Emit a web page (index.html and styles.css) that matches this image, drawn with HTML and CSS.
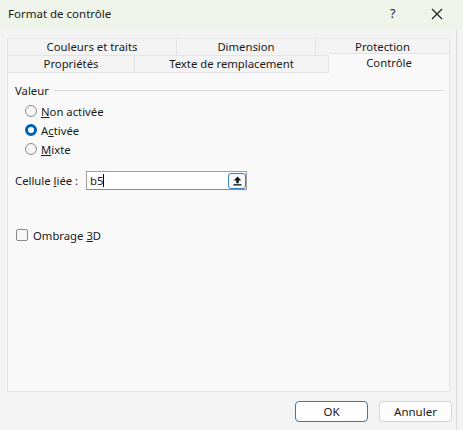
FILE: index.html
```html
<!DOCTYPE html>
<html lang="fr">
<head>
<meta charset="utf-8">
<link rel="stylesheet" href="styles.css">
</head>
<body>
<div class="window">
  <div class="titlebar">
    <span class="title">Format de contrôle</span>
    <span class="help">?</span>
    <span class="close">
      <svg width="12" height="12" viewBox="0 0 12 12"><path d="M1 1L11 11M11 1L1 11" stroke="#1a1a1a" stroke-width="1.1" fill="none"/></svg>
    </span>
  </div>
  <div class="tabs">
    <div class="tabrow">
      <div class="tab w1">Couleurs et traits</div>
      <div class="tab w2">Dimension</div>
      <div class="tab w3">Protection</div>
    </div>
    <div class="tabrow">
      <div class="tab w4">Propriétés</div>
      <div class="tab w5">Texte de remplacement</div>
      <div class="tab w6 active">Contrôle</div>
    </div>
  </div>
  <div class="panel">
    <div class="group-head"><span>Valeur</span><span class="rule"></span></div>
    <div class="options">
      <div class="opt"><span class="radio"></span><span><u>N</u>on activée</span></div>
      <div class="opt"><span class="radio on"></span><span>A<u>c</u>tivée</span></div>
      <div class="opt"><span class="radio"></span><span><u>M</u>ixte</span></div>
    </div>
    <div class="linked">
      <span class="lbl">Cellule <u>l</u>iée :</span>
      <div class="input"><span class="val">b5</span><span class="caret"></span>
        <span class="pick"><svg width="11" height="11" viewBox="0 0 11 11"><path d="M5.5 1.5L1.8 5.4H4.3V8.2H6.7V5.4H9.2Z" fill="#111"/><rect x="1.5" y="9.2" width="8" height="1.3" fill="#111"/></svg></span>
      </div>
    </div>
    <div class="check"><span class="box"></span><span>Ombrage <u>3</u>D</span></div>
  </div>
  <div class="footer">
    <button class="btn primary">OK</button>
    <button class="btn">Annuler</button>
  </div>
  <div class="edge"></div>
</div>
</body>
</html>
```
FILE: styles.css
```css
html, body { margin: 0; padding: 0; }
body {
  width: 463px; height: 430px; overflow: hidden;
  font-family: "Noto Sans", "Open Sans", sans-serif;
  font-size: 11.3px; color: #1a1a1a;
  background: #f3f3f3;
}
.window { position: relative; width: 463px; height: 430px; background: #f3f3f3; }
.titlebar {
  height: 30px; box-sizing: border-box; padding-bottom: 3px; background: #eef4ea;
  display: flex; align-items: center; padding-left: 8px;
}
.title { flex: 1; font-size: 11.5px; }
.help { width: 14px; margin-right: 27px; font-size: 12.5px; }
.close { width: 12px; height: 12px; margin-right: 20px; display: flex; }
.tabs { margin: 8px 0 0 7px; width: 443px; }
.tabrow { display: flex; height: 17px; }
.tab {
  box-sizing: border-box; height: 17px;
  border-top: 1px solid #e3e3e3; border-right: 1px solid #e3e3e3;
  text-align: center; line-height: 16px;
  background: #f3f3f3;
}
.tabrow:first-child .tab { border-top: 1px solid #ebebeb; }
.tabrow .tab:first-child { border-left: 1px solid #e3e3e3; }
.w1 { width: 170px; }
.w2 { width: 139px; }
.w3 { width: 134px; }
.w4 { width: 128px; }
.w5 { width: 194px; }
.w6 { width: 121px; }
.tab.active {
  background: #f9f9f9; height: 20px; margin-top: -2px;
  line-height: 18px;
  position: relative; z-index: 1;
}
.panel {
  margin-left: 7px; width: 443px; height: 320px; box-sizing: border-box;
  background: #f9f9f9; border: 1px solid #e3e3e3;
  padding: 9px 0 0 7px;
}
.group-head { display: flex; align-items: center; gap: 5px; height: 16px; }
.rule { flex: 1; height: 1px; background: #dcdcdc; margin-right: 5px; margin-top: 1px; }
.options { display: flex; flex-direction: column; padding: 5px 0 0 10px; gap: 3px; }
.opt { display: flex; align-items: center; gap: 4px; height: 16px; }
.radio {
  width: 12px; height: 12px; box-sizing: border-box; border-radius: 50%;
  border: 1px solid #8a8a8a; background: #f5f5f5;
}
.radio.on { border: 3.5px solid #005fb8; background: #fff; }
.linked { display: flex; align-items: center; margin-top: 14px; height: 19px; }
.lbl { width: 71px; }
.input {
  width: 161px; height: 19px; box-sizing: border-box;
  background: #fff; border: 1px solid #a0a0a0; border-bottom-color: #8a8a8a;
  display: flex; align-items: center; padding-left: 3px;
}
.val { line-height: 16px; }
.caret { width: 1px; height: 13px; background: #000; }
.pick {
  margin-left: auto; width: 18px; height: 16px; box-sizing: border-box;
  border: 1.5px solid #3c7fc4; border-radius: 3px; background: #f4f8fc;
  display: flex; align-items: center; justify-content: center;
}
.check { display: flex; align-items: center; gap: 5px; margin-top: 37px; height: 16px; padding-left: 1px; }
.box {
  width: 12px; height: 12px; box-sizing: border-box; border: 1px solid #8a8a8a;
  border-radius: 2px; background: #f7f7f7;
}
.footer { display: flex; justify-content: flex-end; gap: 11px; padding: 9px 11px 0 0; }
.btn {
  width: 73px; height: 21px; box-sizing: border-box;
  font-family: "Noto Sans", "Open Sans", sans-serif; font-size: 11.5px; color: #1a1a1a;
  background: #fdfdfd; border: 1px solid #d5d5d5; border-radius: 4px; padding: 0;
}
.btn.primary { border: 1.5px solid #3577c0; }
.edge { position: absolute; right: 6px; top: 30px; bottom: 0; width: 1px; background: #dcdcdc; }
```
